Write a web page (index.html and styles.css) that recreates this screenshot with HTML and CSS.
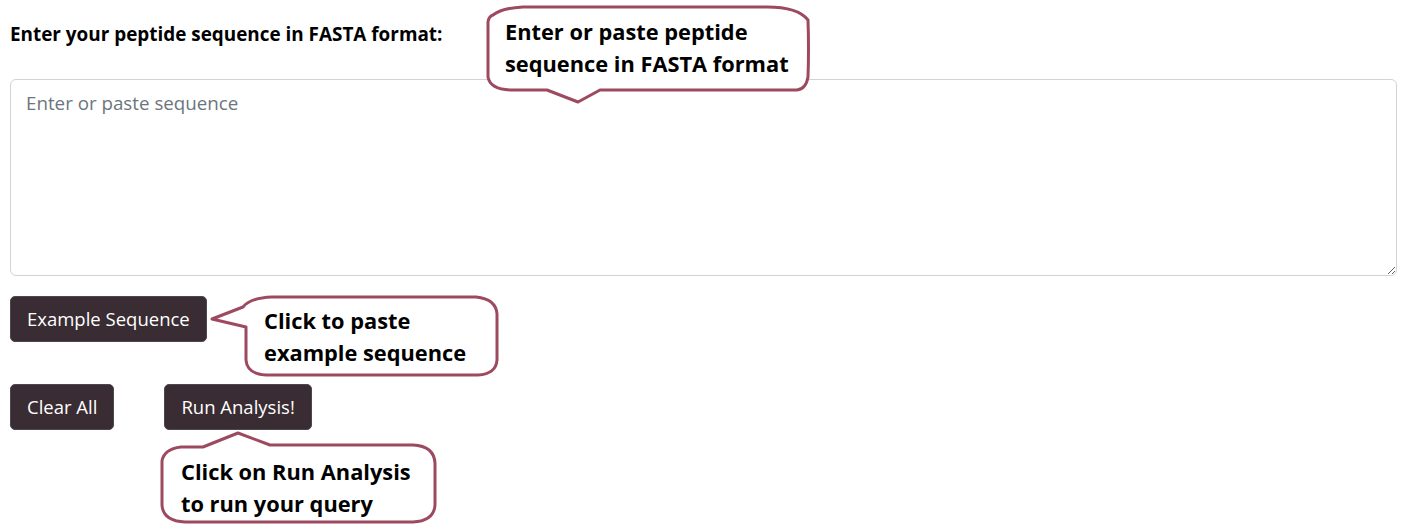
FILE: index.html
```html
<!DOCTYPE html>
<html lang="en">
<head>
<meta charset="utf-8">
<title>Peptide sequence input</title>
<link rel="stylesheet" href="styles.css">
</head>
<body>
<main class="page">
  <label class="field-label" for="seq">Enter your peptide sequence in FASTA format:</label>
  <textarea id="seq" class="seq-input" placeholder="Enter or paste sequence"></textarea>
  <div class="row row-example">
    <button class="btn" type="button">Example Sequence</button>
  </div>
  <div class="row row-actions">
    <button class="btn" type="button">Clear All</button>
    <button class="btn" type="button">Run Analysis!</button>
  </div>

  <div class="callout callout-top">
    <svg class="callout-shape" width="340" height="110" viewBox="0 0 340 110">
      <path d="M 13 15 Q 22 8 43 7 L 287 7 Q 318 7 328 20 Q 329 50 328 77 Q 326 89 317 90 L 120 90 L 98 102 L 67 90 L 30 90 Q 10 89 8 77 L 8 22 Q 9 16 13 15 Z"/>
    </svg>
    <p class="callout-text">Enter or paste peptide<br>sequence in FASTA format</p>
  </div>

  <div class="callout callout-example">
    <svg class="callout-shape" width="305" height="92" viewBox="0 0 305 92">
      <path d="M 12 29 L 43 17 Q 50 8 72 7 L 276 7 Q 296 9 297 24 L 297 70 Q 296 84 278 85 L 66 85 Q 47 84 46 70 L 46 37 Z"/>
    </svg>
    <p class="callout-text">Click to paste<br>example sequence</p>
  </div>

  <div class="callout callout-run">
    <svg class="callout-shape" width="290" height="103" viewBox="0 0 290 103">
      <path d="M 83 8 L 115 20 L 258 20 Q 279 21 280 38 L 280 80 Q 279 96 258 97 L 30 97 Q 8 96 7 80 L 7 36 Q 9 24 26 22 L 48 22 Z"/>
    </svg>
    <p class="callout-text">Click on Run Analysis<br>to run your query</p>
  </div>
</main>
</body>
</html>
```

FILE: styles.css
```css
html, body {
  margin: 0;
  padding: 0;
  background: #ffffff;
}

body {
  font-family: "Open Sans", "Noto Sans", "Liberation Sans", sans-serif;
  font-size: 20px;
  color: #212529;
}

.page {
  position: relative;
  padding: 19px 10px 0 10px;
  display: flex;
  flex-direction: column;
  align-items: flex-start;
  height: 531px;
  box-sizing: border-box;
}

.field-label {
  display: block;
  font-weight: 700;
  font-size: 18.9px;
  line-height: 30px;
  color: #000;
  margin-bottom: 30px;
}

.seq-input {
  box-sizing: border-box;
  width: 100%;
  height: 197px;
  padding: 8px 15px;
  border: 1px solid #ced4da;
  border-radius: 6px;
  font-family: inherit;
  font-size: 18.75px;
  line-height: 30px;
  color: #212529;
  resize: vertical;
}

.seq-input::placeholder {
  color: #6c757d;
}

.row {
  display: flex;
  gap: 50px;
}

.row-example {
  margin-top: 20px;
}

.row-actions {
  margin-top: 42px;
}

.btn {
  box-sizing: border-box;
  height: 46px;
  padding: 0 16px;
  border: 1px solid #4b4650;
  border-radius: 5px;
  background: #392c33;
  color: #ffffff;
  font-family: inherit;
  font-size: 18.5px;
  line-height: 30px;
}

.callout {
  position: absolute;
}

.callout-shape {
  position: absolute;
  left: 0;
  top: 0;
}

.callout-shape path {
  fill: #ffffff;
  stroke: #9d4a60;
  stroke-width: 3;
  stroke-linejoin: round;
}

.callout-text {
  position: relative;
  margin: 0;
  font-family: "Open Sans", "Noto Sans", sans-serif;
  font-weight: 700;
  font-size: 21.8px;
  line-height: 32px;
  color: #000;
  white-space: nowrap;
}

.callout-top {
  left: 480px;
  top: 0;
  width: 340px;
  height: 110px;
}

.callout-top .callout-text {
  padding: 16px 0 0 25px;
}

.callout-example {
  left: 200px;
  top: 290px;
  width: 305px;
  height: 92px;
}

.callout-example .callout-text {
  padding: 15px 0 0 64px;
}

.callout-run {
  left: 155px;
  top: 425px;
  width: 290px;
  height: 103px;
}

.callout-run .callout-text {
  padding: 31px 0 0 26px;
}
```
